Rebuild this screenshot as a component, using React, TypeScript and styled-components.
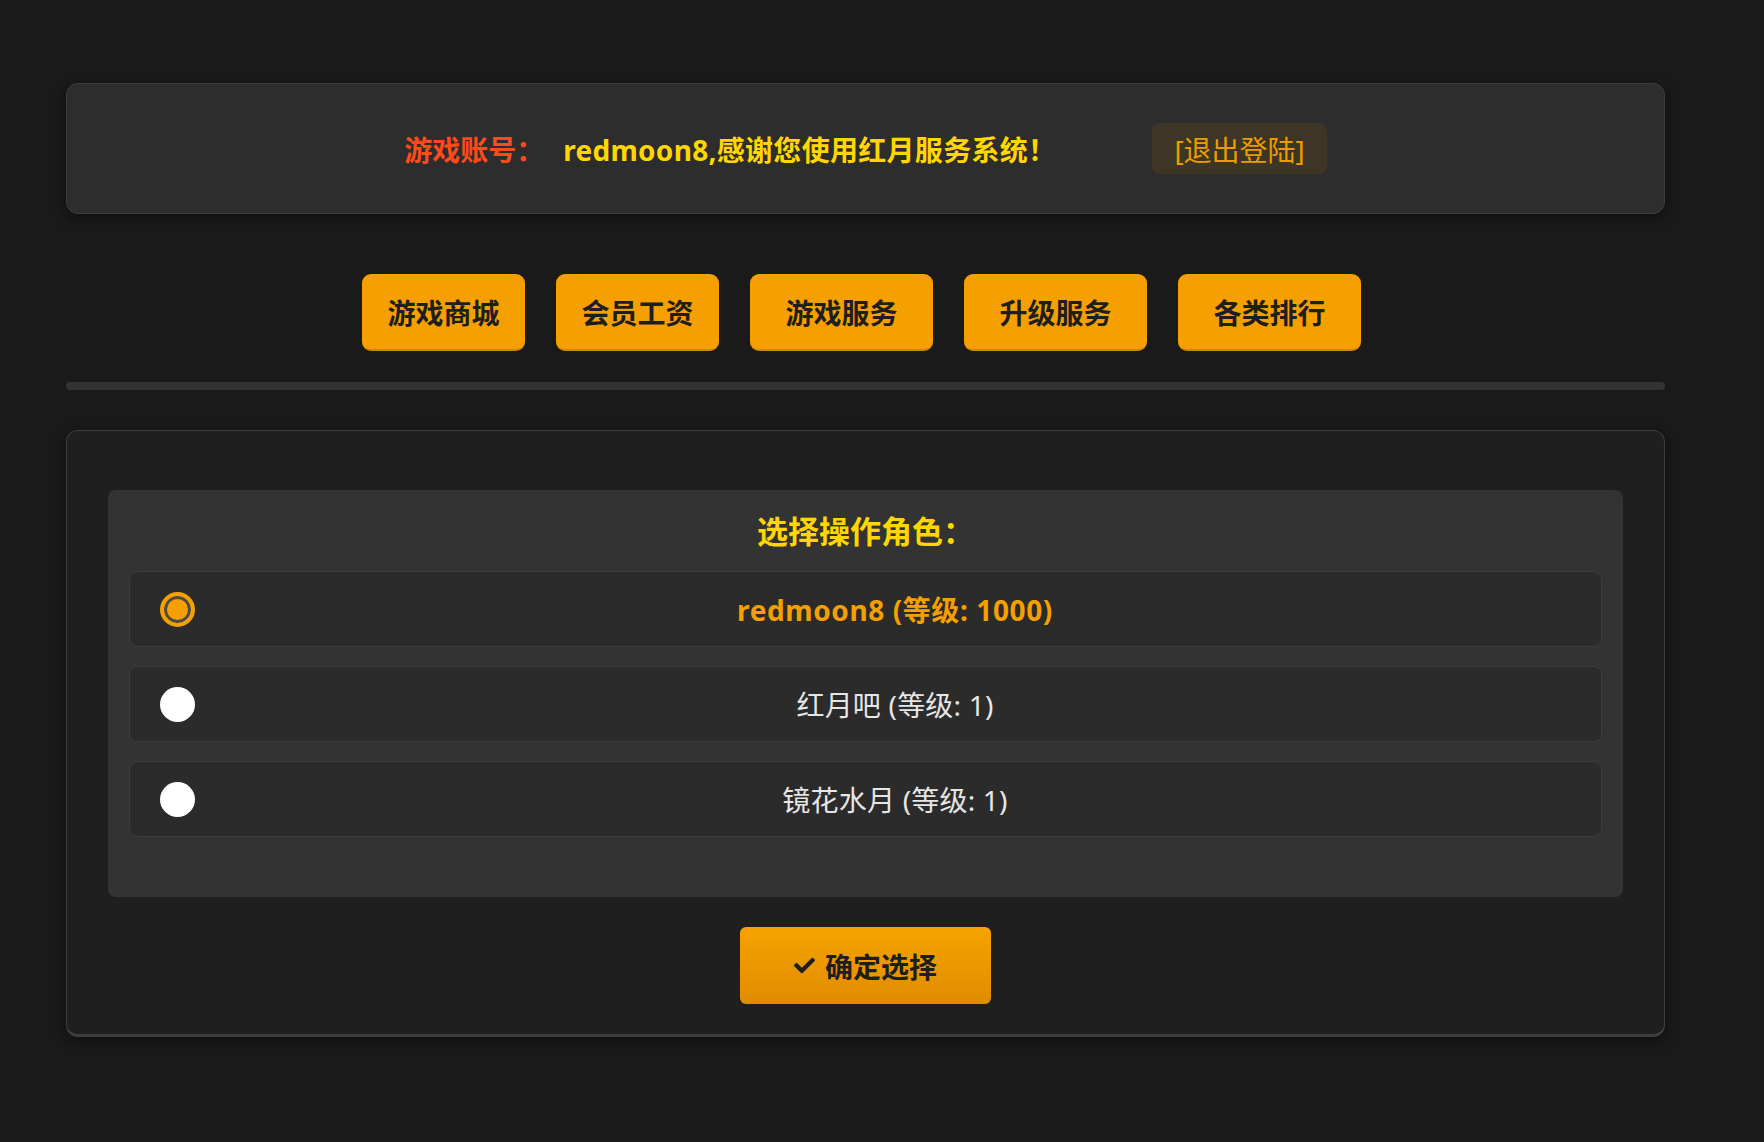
import { useState } from 'react'
import styled, { createGlobalStyle } from 'styled-components'
import { FaCheck } from 'react-icons/fa'

const GlobalStyle = createGlobalStyle`
  html, body {
    margin: 0;
    padding: 0;
    background: #1a1a1a;
  }
  body {
    font-family: "Noto Sans", "Noto Sans CJK SC", sans-serif;
  }
`

const menu = [
  { label: '游戏商城', wide: false },
  { label: '会员工资', wide: false },
  { label: '游戏服务', wide: true },
  { label: '升级服务', wide: true },
  { label: '各类排行', wide: true },
]

const roles = [
  { name: 'redmoon8', level: 1000 },
  { name: '红月吧', level: 1 },
  { name: '镜花水月', level: 1 },
]

const App = () => {
  const [selected, setSelected] = useState(0)

  return (
    <Page>
      <GlobalStyle />
      <Container>
        <HeaderCard>
          <AccountLabel>游戏账号：</AccountLabel>
          <Welcome>redmoon8,感谢您使用红月服务系统！</Welcome>
          <LogoutButton>[退出登陆]</LogoutButton>
        </HeaderCard>

        <Nav>
          {menu.map((item) => (
            <NavButton key={item.label} $wide={item.wide}>
              {item.label}
            </NavButton>
          ))}
        </Nav>

        <Divider />

        <MainCard>
          <RolePanel>
            <PanelTitle>选择操作角色：</PanelTitle>
            <RoleList>
              {roles.map((role, i) => (
                <RoleRow key={role.name} onClick={() => setSelected(i)}>
                  <Radio $checked={selected === i} />
                  <RoleName $checked={selected === i}>
                    {role.name} (等级: {role.level})
                  </RoleName>
                </RoleRow>
              ))}
            </RoleList>
          </RolePanel>

          <ConfirmButton>
            <FaCheck size={21} />
            确定选择
          </ConfirmButton>
        </MainCard>
      </Container>
    </Page>
  )
}

const Page = styled.div`
  min-height: 100vh;
  padding: 83px 0 60px 66px;
  box-sizing: border-box;
`

const Container = styled.div`
  width: 1599px;
`

const HeaderCard = styled.div`
  height: 131px;
  box-sizing: border-box;
  display: flex;
  align-items: center;
  justify-content: center;
  background: #2d2d2d;
  border: 1px solid #3d3d3d;
  border-radius: 12px;
  box-shadow: 0 4px 14px rgba(0, 0, 0, 0.45);
  font-size: 28px;
`

const AccountLabel = styled.span`
  color: #ff4a1c;
  font-weight: bold;
  margin-right: 19px;
`

const Welcome = styled.span`
  color: #ffd700;
  font-weight: bold;
  letter-spacing: 0.3px;
`

const LogoutButton = styled.button`
  margin-left: 96px;
  height: 51px;
  padding: 0 22px;
  border: none;
  border-radius: 8px;
  background: #3d3526;
  color: #ec9c00;
  font-family: inherit;
  font-size: 28px;
  cursor: pointer;
`

const Nav = styled.div`
  margin-top: 60px;
  display: flex;
  justify-content: center;
  gap: 31px;
  padding-right: 8px;
`

const NavButton = styled.button<{ $wide: boolean }>`
  width: ${(p) => (p.$wide ? '183px' : '163px')};
  height: 77px;
  border: none;
  border-bottom: 2px solid #d08800;
  border-radius: 9px;
  background: #f5a000;
  color: #1e1e1e;
  font-family: inherit;
  font-size: 28px;
  font-weight: bold;
  cursor: pointer;
`

const Divider = styled.div`
  margin-top: 31px;
  height: 8px;
  border-radius: 4px;
  background: #333333;
`

const MainCard = styled.div`
  margin-top: 40px;
  padding: 59px 41px 30px;
  background: #1f1f1f;
  border: 1px solid #3e3e3e;
  border-bottom-width: 3px;
  border-radius: 12px;
  box-shadow: 0 4px 14px rgba(0, 0, 0, 0.45);
  display: flex;
  flex-direction: column;
  align-items: center;
`

const RolePanel = styled.div`
  align-self: stretch;
  background: #333333;
  border-radius: 8px;
  padding: 20px 21px 60px;
`

const PanelTitle = styled.div`
  color: #ffd700;
  font-size: 31px;
  font-weight: bold;
  line-height: 42px;
  text-align: center;
  margin-bottom: 19px;
`

const RoleList = styled.div`
  display: flex;
  flex-direction: column;
  gap: 19px;
`

const RoleRow = styled.label`
  height: 76px;
  box-sizing: border-box;
  display: flex;
  align-items: center;
  padding: 0 30px;
  background: #2b2b2b;
  border: 1px solid #3d3d3d;
  border-radius: 8px;
  cursor: pointer;
`

const Radio = styled.span<{ $checked: boolean }>`
  flex: none;
  width: 35px;
  height: 35px;
  box-sizing: border-box;
  border-radius: 50%;
  border: ${(p) => (p.$checked ? '4px solid #f5a000' : 'none')};
  background: ${(p) => (p.$checked ? '#f5a000' : '#ffffff')};
  box-shadow: ${(p) => (p.$checked ? 'inset 0 0 0 3px #4d4a44' : 'none')};
`

const RoleName = styled.span<{ $checked: boolean }>`
  flex: 1;
  margin-left: 24px;
  text-align: center;
  font-size: 28px;
  color: ${(p) => (p.$checked ? '#f5a000' : '#e6e6e6')};
  font-weight: ${(p) => (p.$checked ? 'bold' : 'normal')};
  letter-spacing: ${(p) => (p.$checked ? '0.6px' : '0.2px')};
`

const ConfirmButton = styled.button`
  margin-top: 30px;
  width: 251px;
  height: 77px;
  display: flex;
  align-items: center;
  justify-content: center;
  gap: 10px;
  border: none;
  border-radius: 6px;
  background: linear-gradient(180deg, #f6a300, #e08c00);
  color: #1e1e1e;
  font-family: inherit;
  font-size: 28px;
  font-weight: bold;
  cursor: pointer;
`

export default App
